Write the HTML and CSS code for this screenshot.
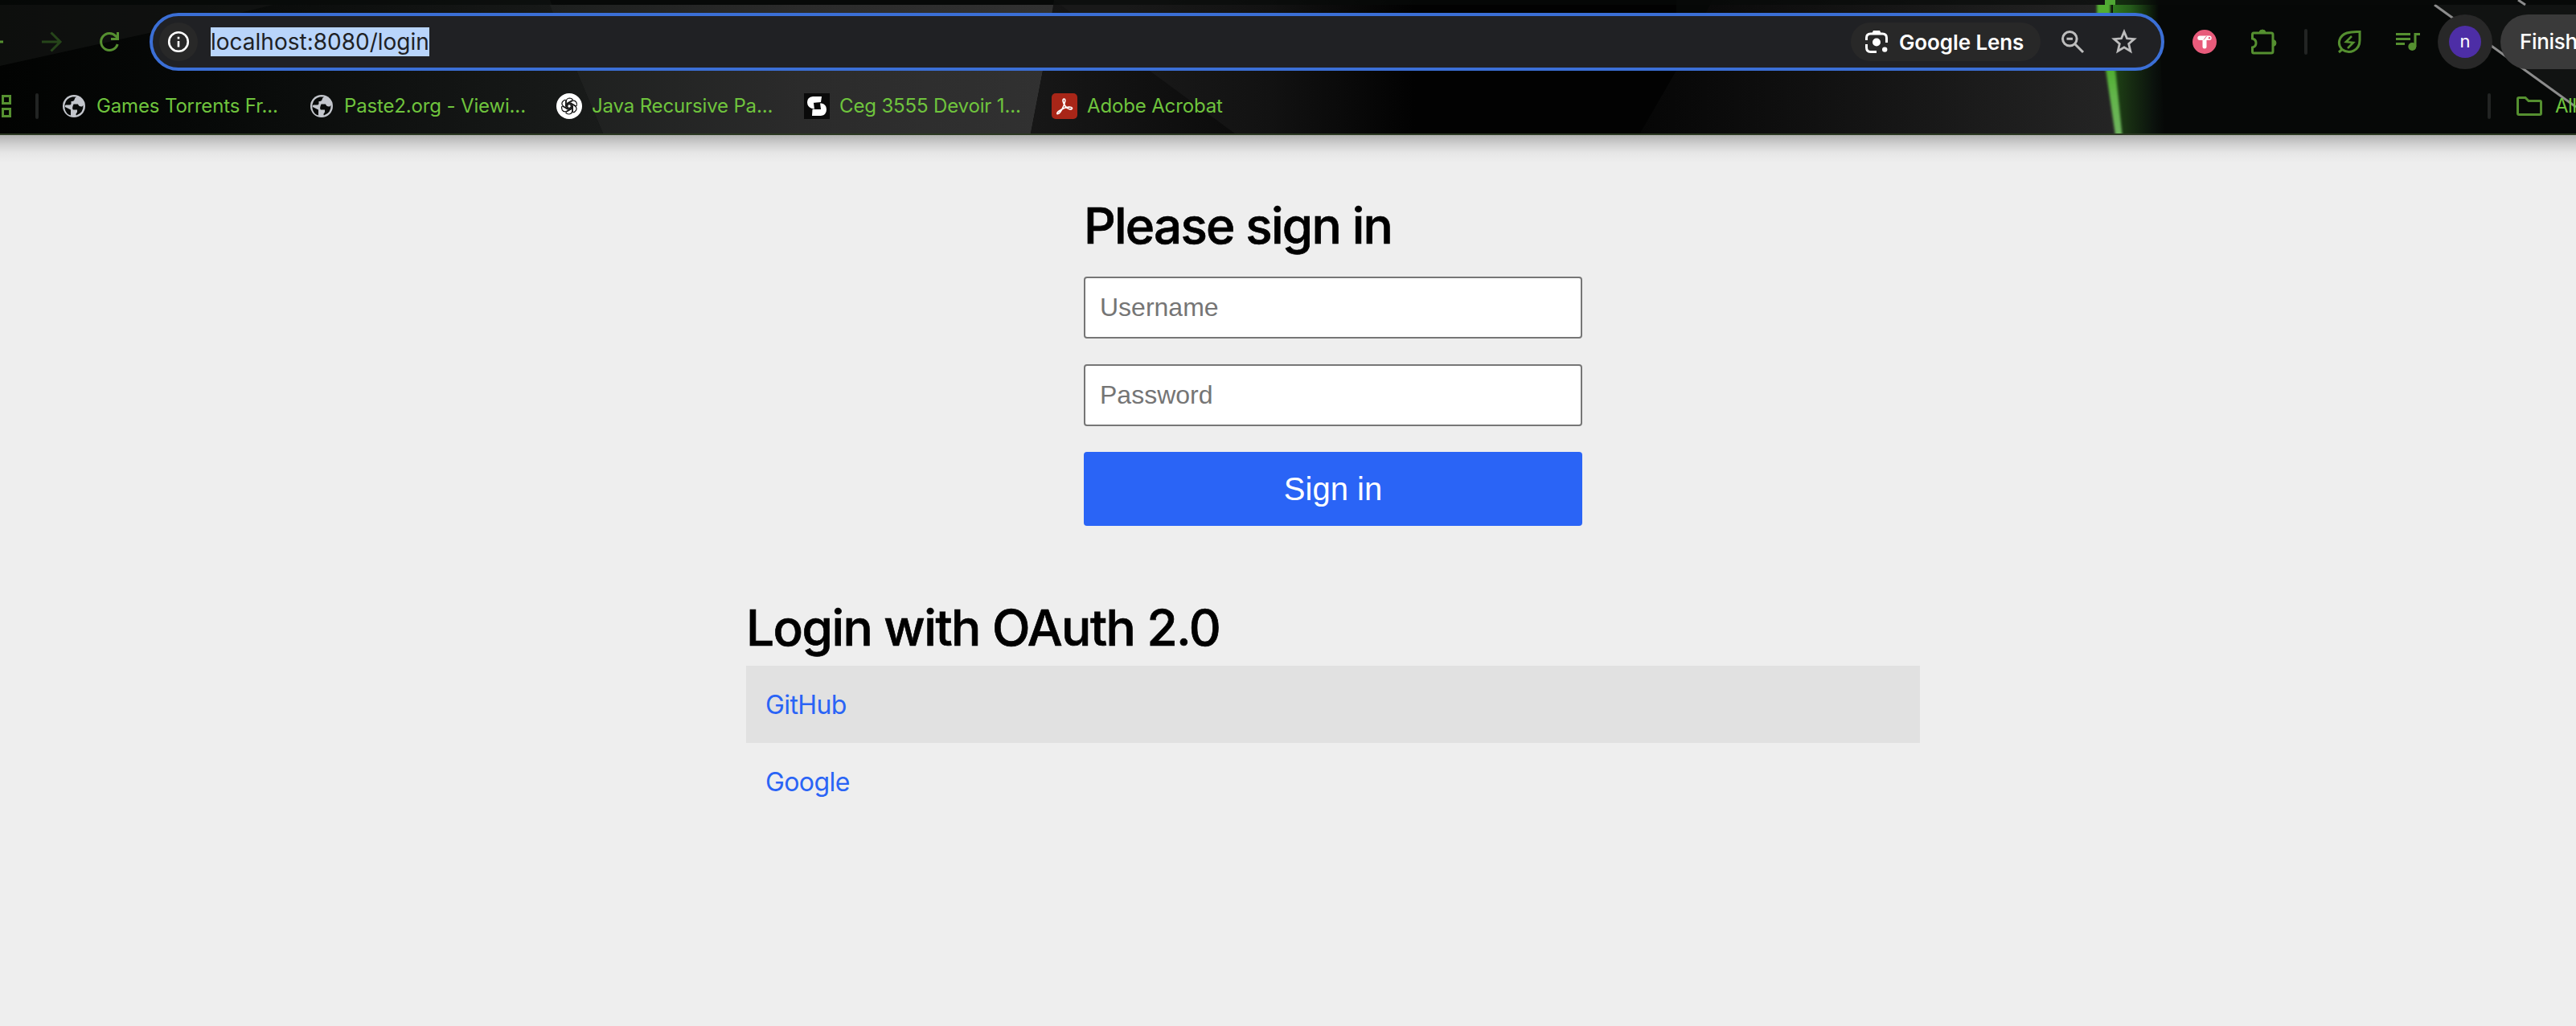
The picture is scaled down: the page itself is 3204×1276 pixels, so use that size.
FILE: index.html
```html
<!DOCTYPE html>
<html lang="en">
<head>
<meta charset="utf-8">
<title>Please sign in</title>
<link rel="stylesheet" href="styles.css">
</head>
<body>
<header class="browser">
  <svg class="wallpaper" viewBox="0 0 3204 166" preserveAspectRatio="none" aria-hidden="true">
    <defs>
      <linearGradient id="slab" x1="0" x2="1">
        <stop offset="0" stop-color="#020302"/><stop offset=".3" stop-color="#060807"/><stop offset="1" stop-color="#191b1a"/>
      </linearGradient>
      <linearGradient id="slab-light" x1="0" x2="1">
        <stop offset="0" stop-color="#1d1f1e"/><stop offset=".5" stop-color="#2b2b2b"/><stop offset="1" stop-color="#313131"/>
      </linearGradient>
      <linearGradient id="wedge" x1="0" x2="1">
        <stop offset="0" stop-color="#171717"/><stop offset="1" stop-color="#080808"/>
      </linearGradient>
      <linearGradient id="facet" gradientUnits="userSpaceOnUse" x1="1400" y1="0" x2="1760" y2="0">
        <stop offset="0" stop-color="#191919"/><stop offset=".5" stop-color="#121212"/><stop offset="1" stop-color="#020202"/>
      </linearGradient>
      <linearGradient id="rise" x1="0" x2="1">
        <stop offset="0" stop-color="#060606"/><stop offset=".6" stop-color="#181818"/><stop offset="1" stop-color="#252525"/>
      </linearGradient>
      <linearGradient id="glow" x1="0" x2="1">
        <stop offset="0" stop-color="#1f4615"/><stop offset=".35" stop-color="#172d12"/><stop offset=".8" stop-color="#0b120d"/><stop offset="1" stop-color="#060807"/>
      </linearGradient>
      <linearGradient id="glow-top" x1="0" x2="1">
        <stop offset="0" stop-color="#2f7a1f"/><stop offset=".4" stop-color="#245a1a"/><stop offset="1" stop-color="#060807"/>
      </linearGradient>
      <linearGradient id="beam" x1="0" x2="0" y1="0" y2="1">
        <stop offset="0" stop-color="#4fae30"/><stop offset=".4" stop-color="#62b54a"/><stop offset="1" stop-color="#6fb45e"/>
      </linearGradient>
      <filter id="soft" x="-.5" width="2"><feGaussianBlur stdDeviation="1.5 0"/></filter>
    </defs>
    <rect width="3204" height="166" fill="#060807"/>
    <path d="M0 0H684L718 90L750 166H0Z" fill="url(#slab)"/>
    <path d="M0 6H340L290 18L0 82Z" fill="#151716" opacity=".6"/>
    <path d="M684 6L718 90L750 166H1282L1297 88L1311 6Z" fill="url(#slab-light)"/>
    <path d="M1311 0H1620V166H1282L1297 88Z" fill="url(#wedge)"/>
    <path d="M1311 0L1430 88L1536 166H2040L2085 88V0Z" fill="url(#facet)"/>
    <path d="M2130 0L2085 88L2040 166H2640L2630 88L2620 0Z" fill="url(#rise)"/>
    <path d="M2626 30H2685L2692 166H2636Z" fill="url(#glow)"/>
    <path d="M2628 0H2685V30H2628Z" fill="url(#glow-top)"/>
    <g filter="url(#soft)">
      <path d="M2608 6H2625V30H2608Z" fill="#52ae33"/>
      <path d="M2619 86H2631L2639.500 168H2631Z" fill="url(#beam)"/>
    </g>
    <path d="M3028 6L3204 136V6Z" fill="#111312"/>
    <path d="M3028 6L3204 133" stroke="#8c8c8c" stroke-width="3"/>
    <rect width="3204" height="6" fill="#080a09" opacity=".65"/>
    <path d="M2618 0H2631V6H2618Z" fill="#4fa834"/>
    <path d="M3132 0L3141 6" stroke="#8c8c8c" stroke-width="3"/>
  </svg>

  <div class="toolbar">
    <svg class="icon back" width="6" height="28" viewBox="0 0 6 28"><path d="M0 14H4" stroke="#559030" stroke-width="3"/></svg>
    <svg class="icon forward" width="28" height="28" viewBox="0 0 28 28" fill="none" stroke="#26451a" stroke-width="3"><path d="M2 14H25M13.500 2.500L25 14L13.500 25.500"/></svg>
    <svg class="icon reload" width="28" height="28" viewBox="0 0 28 28" fill="none" stroke="#559030" stroke-width="3"><path d="M24.2 17A10.5 10.5 0 1 1 22 7L25 9.5"/><path d="M24.500 2V10.500H16"/></svg>

    <div class="omnibox">
      <span class="site-info"><svg width="28" height="28" viewBox="0 0 28 28" fill="none" stroke="#fff" stroke-width="2.600"><circle cx="14" cy="14" r="11.800"/><path d="M14 13V20.500M14 7.800V10.600"/></svg></span>
      <span class="url">localhost:8080/login</span>
      <span class="lens">
        <svg width="30" height="30" viewBox="0 0 30 30"><g fill="none" stroke="#fff" stroke-width="3"><path d="M2.500 13V10Q2.500 5 7.500 5H22.500Q27.500 5 27.500 10V16M2.500 18V22Q2.500 27.500 7.500 27.500H15"/></g><path d="M11 1H19L21 5H9Z" fill="#fff"/><circle cx="15" cy="15.500" r="5" fill="#fff"/><circle cx="25.200" cy="24.600" r="3.200" fill="#fff"/></svg>
        <span class="lens-label">Google Lens</span>
      </span>
      <svg class="icon zoom-out" width="30" height="30" viewBox="0 0 30 30" fill="none" stroke="#bdbdbd" stroke-width="3"><circle cx="11.300" cy="11.300" r="8.800"/><path d="M17.500 17.500L28 28M7.500 11.300H15"/></svg>
      <svg class="icon star" width="32" height="32" viewBox="0 0 32 32" fill="none" stroke="#bdbdbd" stroke-width="2.800"><path d="M16 3.500L19.500 11.800L28.500 12.600L21.700 18.500L23.800 27.500L16 22.800L8.200 27.500L10.300 18.500L3.500 12.600L12.500 11.800Z"/></svg>
    </div>

    <svg class="icon ext" width="30" height="30" viewBox="0 0 30 30"><circle cx="15" cy="15" r="15" fill="#e85b7b"/><path d="M9 7.500H21a2.700 2.700 0 0 1 0 5.400H17.500V21a2.500 2.500 0 0 1-5 0V12.900H9A2.700 2.700 0 0 1 9 7.500Z" fill="#fff"/><path d="M14 12.500L17.500 8" stroke="#e85b7b"/><circle cx="21" cy="10.200" r="1.200" fill="#e85b7b"/></svg>
    <svg class="icon puzzle" width="34" height="34" viewBox="0 0 34 34"><path d="M4 6H26Q28 6 28 8V29Q28 31 26 31H4Q2.500 31 2.500 29V24Q7 23 7 18.500Q7 14 2.500 13V8Q2.500 6 4 6Z" fill="none" stroke="#559030" stroke-width="3"/><path d="M11 6a4 4 0 0 1 8 0ZM28 14.500a4 4 0 0 1 0 8Z" fill="#559030" stroke="#559030"/></svg>
    <i class="rule rule-tools"></i>
    <svg class="icon leaf" width="30" height="30" viewBox="0 0 30 30" fill="none" stroke="#559030" stroke-width="3"><path d="M2 28L6 24.500M6 24.500C-1 17 3 7 12 4Q18 2 28 2.500V13C28 26 15 31 6 24.500Z"/><path d="M18 8L11 15L20 16L13 23" stroke-width="2.600"/></svg>
    <svg class="icon music" width="32" height="28" viewBox="0 0 32 28"><path d="M1 4.500H19M1 10.500H19M1 16.500H12M25 20V4.500H31" fill="none" stroke="#559030" stroke-width="3"/><circle cx="21.300" cy="20" r="5" fill="#559030"/></svg>
    <span class="profile"><b>n</b></span>
    <span class="finish">Finish</span>
  </div>

  <nav class="bookmarks">
    <svg class="icon apps" width="16" height="30" viewBox="0 0 16 30" fill="none" stroke="#559030" stroke-width="3"><path d="M3.500 2.500H12.500V11.500H3.500ZM3.500 18.500H12.500V27.500H3.500Z"/></svg>
    <i class="rule rule-apps"></i>
    <a class="bookmark"><svg width="32" height="32" viewBox="0 0 32 32"><circle cx="16" cy="16" r="14" fill="#c3c6cc"/><path d="M19 4.500Q17 5 16.500 8Q16 10 12.500 10V13Q12.500 14.500 10 14.500H6Q4.500 14.500 5 17L12 20.500V27.500Q6 26 4.500 19V14Q6 6 14 4.500ZM15.500 13.500H21Q22 17 26 16.500L27.500 15Q28 24 19 27.500Q17.500 26 20 23.500V20.500H15Q13 19 15.500 13.500Z" fill="#080a09"/></svg><span class="bm-label">Games Torrents Fr...</span></a>
    <a class="bookmark"><svg width="32" height="32" viewBox="0 0 32 32"><circle cx="16" cy="16" r="14" fill="#c3c6cc"/><path d="M19 4.500Q17 5 16.500 8Q16 10 12.500 10V13Q12.500 14.500 10 14.500H6Q4.500 14.500 5 17L12 20.500V27.500Q6 26 4.500 19V14Q6 6 14 4.500ZM15.500 13.500H21Q22 17 26 16.500L27.500 15Q28 24 19 27.500Q17.500 26 20 23.500V20.500H15Q13 19 15.500 13.500Z" fill="#080a09"/></svg><span class="bm-label">Paste2.org - Viewi...</span></a>
    <a class="bookmark"><svg width="32" height="32" viewBox="0 0 32 32"><circle cx="16" cy="16" r="16" fill="#fff"/><g fill="none" stroke="#111" stroke-width="1.200"><path id="knot" d="M12.200 17.800V10.500Q12.400 6.300 16.200 6Q19 6 20.600 8.200M13.800 19V12.200L20.200 8.600"/><use href="#knot" transform="rotate(60 16 16)"/><use href="#knot" transform="rotate(120 16 16)"/><use href="#knot" transform="rotate(180 16 16)"/><use href="#knot" transform="rotate(240 16 16)"/><use href="#knot" transform="rotate(300 16 16)"/></g></svg><span class="bm-label">Java Recursive Pa...</span></a>
    <a class="bookmark"><svg width="32" height="32" viewBox="0 0 32 32"><path d="M0 0H32V32H0Z" fill="#0a0a0a"/><path d="M22 4H11Q4 5 4 11Q4 17 10 19L17 20.500Q20 20 19.500 12H13L11 12L21 11Z" fill="#fff"/><path d="M10 28H21Q28 27 28 20Q28 14 22 12.500H19L20.500 20H10.500Z" fill="#fff"/><path d="M12 12H20L21 20H13Z" fill="#0a0a0a"/></svg><span class="bm-label">Ceg 3555 Devoir 1...</span></a>
    <a class="bookmark"><svg width="32" height="32" viewBox="0 0 32 32"><rect width="32" height="32" rx="5" fill="#a82618"/><path d="M15.500 7C13 7 14 12 17 16C20 20 25 21 25.500 18.700C26 16.500 18 16.500 12.500 20C6 23.500 6 26 8 25.500C11 25 16 15 16.700 10C17 8 16.500 7 15.500 7Z" fill="none" stroke="#fff" stroke-width="1.700"/></svg><span class="bm-label">Adobe Acrobat</span></a>
    <i class="rule rule-all"></i>
    <svg class="icon folder" width="34" height="28" viewBox="0 0 34 28" fill="none" stroke="#559030" stroke-width="3"><path d="M4 3.500H12L16 7.500H30Q31.500 7.500 31.500 9V23Q31.500 24.500 30 24.500H4Q2.500 24.500 2.500 23V5Q2.500 3.500 4 3.500Z"/></svg>
    <span class="bm-label all-label">All</span>
  </nav>
</header>

<main class="page">
  <form class="login-form">
    <h2>Please sign in</h2>
    <input class="field" type="text" placeholder="Username">
    <input class="field" type="password" placeholder="Password">
    <button class="submit" type="button">Sign in</button>
  </form>
  <section class="oauth">
    <h2>Login with OAuth 2.0</h2>
    <ul class="providers">
      <li><a href="#github">GitHub</a></li>
      <li><a href="#google">Google</a></li>
    </ul>
  </section>
</main>
</body>
</html>
```
FILE: styles.css
```css
* { box-sizing: border-box; }

body {
  margin: 0;
  width: 3204px;
  height: 1276px;
  overflow: hidden;
  background: #eee;
  font-family: Inter, "Liberation Sans", sans-serif;
}

svg { display: block; flex: none; }

/* browser frame */
.browser {
  position: relative;
  height: 168px;
  overflow: hidden;
  border-bottom: 2px solid #2c3923;
  background: #060807;
}

.wallpaper {
  position: absolute;
  inset: 0;
  width: 3204px;
  height: 166px;
}

.toolbar,
.bookmarks {
  position: relative;
  display: flex;
  align-items: center;
  white-space: nowrap;
}

.toolbar { height: 72px; margin-top: 16px; }
.forward { margin-left: 44px; }
.reload { margin-left: 44px; }

.omnibox {
  display: flex;
  flex: none;
  align-items: center;
  width: 2506px;
  height: 72px;
  margin-left: 36px;
  padding: 0 30px 0 8px;
  border: 4px solid #3b6fd6;
  border-radius: 36px;
  background: #202124;
}

.site-info {
  display: grid;
  place-items: center;
  width: 48px;
  height: 48px;
  border-radius: 50%;
  background: #282828;
}

.url {
  width: 272px;
  height: 36px;
  margin-left: 16px;
  background: #b9d5fb;
  color: #202124;
  font-size: 28px;
  line-height: 36px;
}

.lens {
  display: flex;
  align-items: center;
  gap: 13px;
  width: 236px;
  height: 48px;
  margin-left: auto;
  padding-left: 17px;
  border-radius: 24px;
  background: #282828;
  color: #fff;
  font-size: 26px;
  font-weight: 600;
  letter-spacing: -0.1px;
}

.zoom-out { margin-left: 25px; }
.star { margin-left: 33px; }
.ext { margin-left: 35px; }
.puzzle { margin-left: 42px; }

.rule {
  flex: none;
  width: 4px;
  height: 32px;
  border-radius: 2px;
  background: #222423;
}

.rule-tools { margin-left: 33px; }
.leaf { margin-left: 37px; }
.music { margin-left: 42px; }

.profile {
  display: grid;
  flex: none;
  place-items: center;
  width: 68px;
  height: 68px;
  margin-left: 21px;
  border-radius: 50%;
  background: #282828;
}

.profile b {
  width: 40px;
  height: 40px;
  border-radius: 50%;
  background: #4d2ea6;
  color: #fff;
  font-size: 22px;
  font-weight: 400;
  line-height: 38px;
  text-align: center;
}

.finish {
  flex: none;
  width: 240px;
  height: 68px;
  margin-left: 10px;
  padding-left: 24px;
  border-radius: 34px;
  background: #3a3a3a;
  color: #fff;
  font-size: 26px;
  font-weight: 500;
  letter-spacing: -0.3px;
  line-height: 68px;
}

.bookmarks { height: 32px; margin-top: 28px; }
.rule-apps { margin: 0 28px; }

.bookmark {
  display: flex;
  flex: none;
  align-items: center;
  gap: 12px;
  width: 308px;
}

.bm-label {
  color: #6fc43d;
  font-size: 24px;
  letter-spacing: -0.15px;
  line-height: 32px;
}

.rule-all { margin-left: 1478px; }
.folder { margin-left: 31px; }
.all-label { margin-left: 15px; letter-spacing: -0.6px; }

/* sign-in page */
.page {
  height: 1108px;
  padding-top: 66px;
  background: linear-gradient(#b2b2b2, #d2d2d2 12px, #e6e6e6 22px, #eee 34px);
}

.login-form { width: 620px; margin-left: 1348px; }
.oauth { width: 1460px; margin: 80px 0 0 928px; }

h2 {
  margin: 0;
  color: #000;
  font-size: 62px;
  font-weight: 500;
  letter-spacing: -1.5px;
  line-height: 94px;
  white-space: nowrap;
  -webkit-text-stroke: 0.7px #000;
}

.login-form h2 { height: 110px; letter-spacing: -1.8px; }

.field {
  display: block;
  width: 100%;
  height: 77px;
  margin: 0 0 32px;
  padding: 0 18px;
  border: 2px solid #767676;
  border-radius: 4px;
  background: #fff;
  font-family: "Liberation Sans", sans-serif;
  font-size: 32px;
}

.field::placeholder { color: #757575; }

.submit {
  display: block;
  width: 100%;
  height: 92px;
  padding: 0;
  border: 0;
  border-radius: 4px;
  background: #2a64f6;
  color: #fff;
  font-family: "Liberation Sans", sans-serif;
  font-size: 40px;
}

.providers {
  margin: 0;
  padding: 0;
  list-style: none;
}

.providers li {
  height: 96px;
  padding-left: 24px;
  font-size: 32px;
  letter-spacing: -0.6px;
  line-height: 98px;
}

.providers li:nth-child(odd) { background: #e1e1e1; }
.providers a { color: #2a64f6; text-decoration: none; }
```
